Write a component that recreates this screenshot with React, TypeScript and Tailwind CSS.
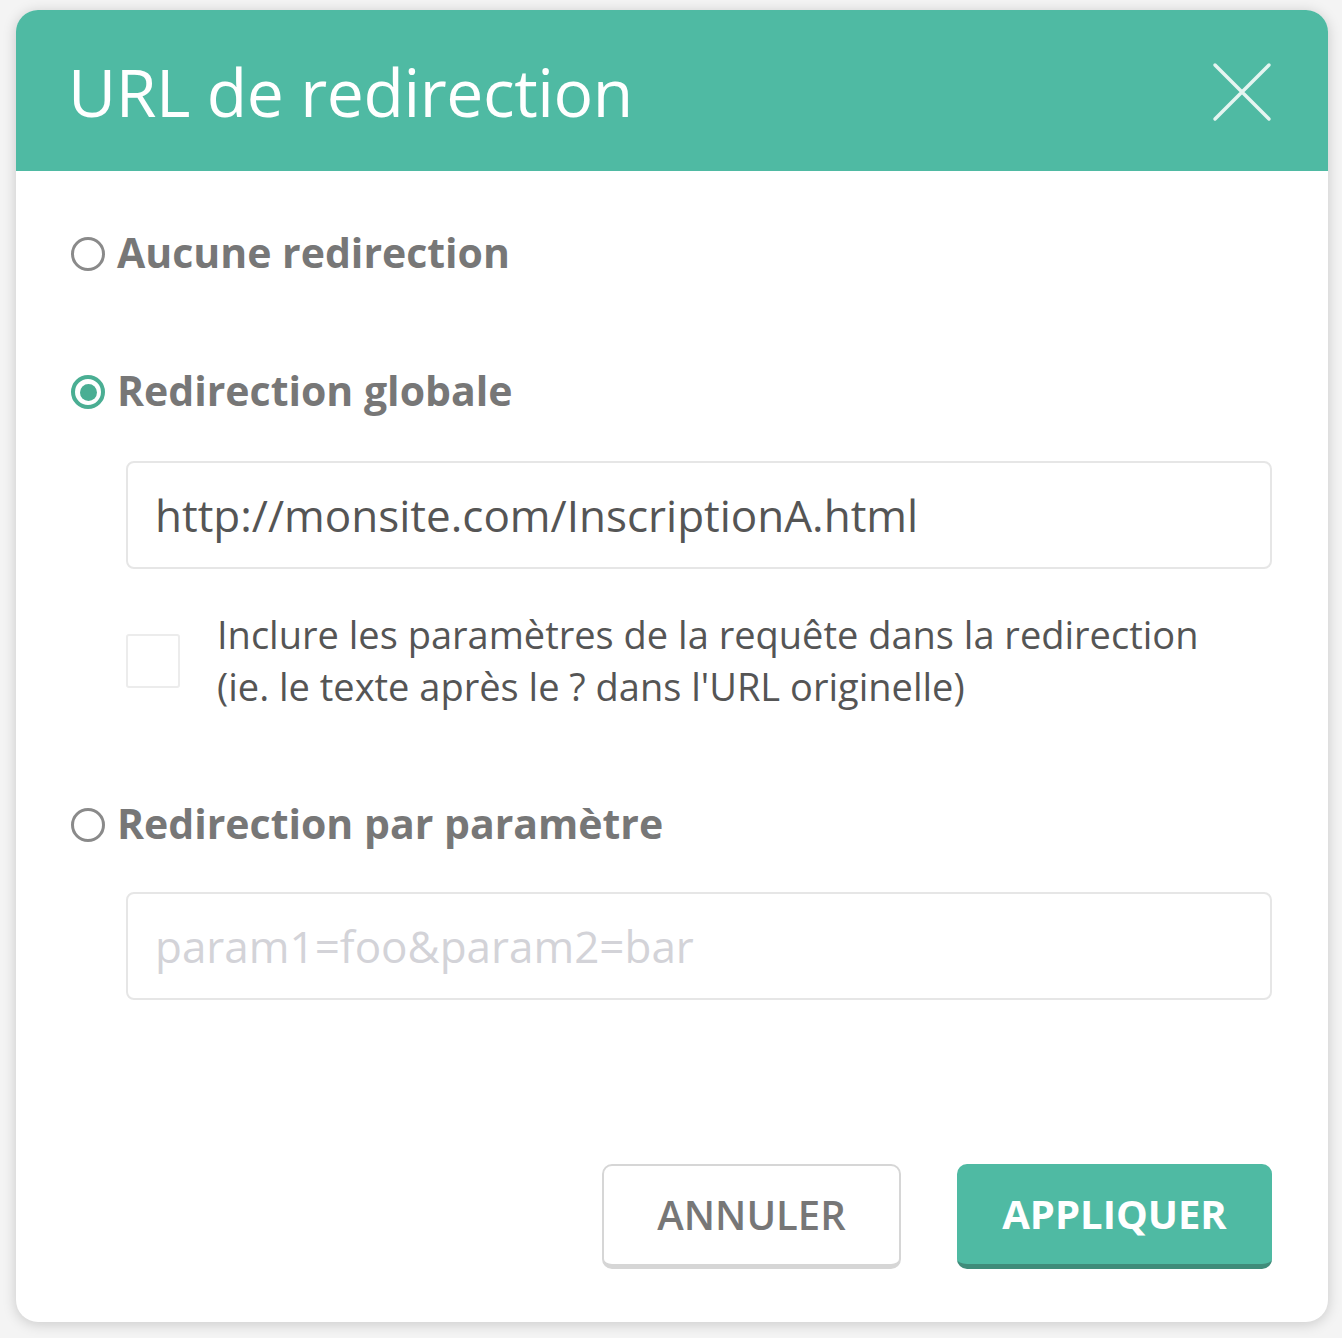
import React from "react";

function Radio({ checked }: { checked?: boolean }) {
  if (checked) {
    return (
      <span className="flex h-[34px] w-[34px] shrink-0 items-center justify-center rounded-full border-[4px] border-[#4aae93] bg-white">
        <span className="h-[17px] w-[17px] rounded-full bg-[#4aae93]" />
      </span>
    );
  }
  return <span className="h-[34px] w-[34px] shrink-0 rounded-full border-[3px] border-[#8a8a8a] bg-white" />;
}

export default function App() {
  return (
    <div className="min-h-[1338px] w-[1342px] bg-[#f4f4f4] pl-[16px] pt-[10px]" style={{ fontFamily: '"Open Sans", "Noto Sans", sans-serif' }}>
      <div className="flex h-[1312px] w-[1312px] flex-col overflow-hidden rounded-[22px] bg-white shadow-[0_2px_14px_rgba(0,0,0,0.18)]">
        <div className="flex h-[161px] shrink-0 items-center justify-between bg-[#4fbaa3] pl-[52px] pr-[56px]">
          <h1 className="text-[66px] font-normal leading-none tracking-[-0.4px] text-white">URL de redirection</h1>
          <svg width="60" height="60" viewBox="0 0 60 60" className="mt-[2px]">
            <path d="M3 3 L57 57 M57 3 L3 57" stroke="rgba(255,255,255,0.85)" strokeWidth="3.5" strokeLinecap="round" />
          </svg>
        </div>
        <div className="flex flex-1 flex-col pl-[55px] pr-[56px]">
          <label className="mt-[64px] flex items-center gap-[12px]">
            <Radio />
            <span className="-mt-[3px] text-[41px] font-bold leading-none text-[#777777]">Aucune redirection</span>
          </label>
          <label className="mt-[100px] flex items-center gap-[12px]">
            <Radio checked />
            <span className="-mt-[3px] text-[41px] font-bold leading-none text-[#777777]">Redirection globale</span>
          </label>
          <div className="ml-[55px] mt-[50px] flex h-[108px] items-center rounded-[8px] border-[2px] border-[#e6e6e6] px-[27px]">
            <span className="text-[44px] leading-none text-[#555555]">http://monsite.com/InscriptionA.html</span>
          </div>
          <div className="ml-[55px] mt-[45px] flex items-start gap-[37px]">
            <span className="mt-[20px] h-[54px] w-[54px] shrink-0 rounded-[3px] border-[2px] border-[#ececec] bg-white" />
            <p className="-mt-[6px] text-[38px] leading-[52px] text-[#555555]">
              Inclure les paramètres de la requête dans la redirection
              <br />
              (ie. le texte après le ? dans l'URL originelle)
            </p>
          </div>
          <label className="mt-[94px] flex items-center gap-[12px]">
            <Radio />
            <span className="-mt-[3px] text-[41px] font-bold leading-none text-[#777777]">Redirection par paramètre</span>
          </label>
          <div className="ml-[55px] mt-[48px] flex h-[108px] items-center rounded-[8px] border-[2px] border-[#e6e6e6] px-[27px]">
            <span className="text-[44px] leading-none text-[#d3d3d8]">param1=foo&amp;param2=bar</span>
          </div>
          <div className="mt-[164px] flex justify-end gap-[56px]">
            <button className="flex h-[105px] w-[299px] items-center justify-center rounded-[10px] border-[2px] border-b-[5px] border-[#d6d6d6] bg-white text-[40px] font-semibold text-[#777777]">
              ANNULER
            </button>
            <button className="flex h-[105px] w-[315px] items-center justify-center rounded-[10px] border-b-[5px] border-[#3f8c7a] bg-[#4fbaa3] text-[40px] font-bold text-white">
              APPLIQUER
            </button>
          </div>
        </div>
      </div>
    </div>
  );
}
